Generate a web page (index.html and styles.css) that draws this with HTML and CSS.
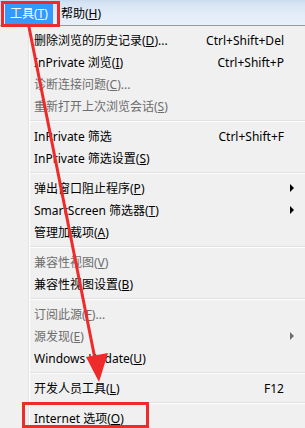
FILE: index.html
```html
<!DOCTYPE html>
<html>
<head>
<meta charset="utf-8">
<link rel="stylesheet" href="styles.css">
</head>
<body>
<div class="page">
  <div class="menubar">
    <span class="top-item active">工具(<u>T</u>)</span>
    <span class="top-item">帮助(<u>H</u>)</span>
  </div>
  <div class="menu">
    <div class="item"><span class="label">删除浏览的历史记录(<u>D</u>)...</span><span class="key">Ctrl+Shift+Del</span></div>
    <div class="item"><span class="label">InPrivate 浏览(<u>I</u>)</span><span class="key">Ctrl+Shift+P</span></div>
    <div class="item disabled"><span class="label">诊断连接问题(<u>C</u>)...</span></div>
    <div class="item disabled"><span class="label">重新打开上次浏览会话(<u>S</u>)</span></div>
    <div class="sep"></div>
    <div class="item"><span class="label">InPrivate 筛选</span><span class="key">Ctrl+Shift+F</span></div>
    <div class="item"><span class="label">InPrivate 筛选设置(<u>S</u>)</span></div>
    <div class="sep"></div>
    <div class="item"><span class="label">弹出窗口阻止程序(<u>P</u>)</span><span class="arrow"></span></div>
    <div class="item"><span class="label">SmartScreen 筛选器(<u>T</u>)</span><span class="arrow"></span></div>
    <div class="item"><span class="label">管理加载项(<u>A</u>)</span></div>
    <div class="sep"></div>
    <div class="item disabled"><span class="label">兼容性视图(<u>V</u>)</span></div>
    <div class="item"><span class="label">兼容性视图设置(<u>B</u>)</span></div>
    <div class="sep"></div>
    <div class="item disabled"><span class="label">订阅此源(<u>F</u>)...</span></div>
    <div class="item disabled"><span class="label">源发现(<u>E</u>)</span><span class="arrow"></span></div>
    <div class="item"><span class="label">Windows Update(<u>U</u>)</span></div>
    <div class="sep"></div>
    <div class="item"><span class="label">开发人员工具(<u>L</u>)</span><span class="key">F12</span></div>
    <div class="sep"></div>
    <div class="item"><span class="label">Internet 选项(<u>O</u>)</span></div>
  </div>
  <svg class="marks" width="305" height="428" viewBox="0 0 305 428">
    <rect x="2.5" y="2.5" width="56" height="23" fill="none" stroke="#ee2a2a" stroke-width="3"/>
    <line x1="29" y1="27" x2="96" y2="364" stroke="#ee2a2a" stroke-width="3"/>
    <polygon points="86,357 108,353 99,382" fill="#ee2a2a"/>
    <rect x="23.5" y="403.5" width="124" height="23" fill="none" stroke="#ee2a2a" stroke-width="3"/>
  </svg>
</div>
</body>
</html>
```
FILE: styles.css
```css
html, body {
  margin: 0;
  padding: 0;
  background: #f0f0f0;
}
.page {
  position: relative;
  width: 305px;
  height: 428px;
  overflow: hidden;
  font-family: "Noto Sans", "Noto Sans CJK SC", sans-serif;
  font-size: 12px;
  color: #000;
}
.menubar {
  height: 25px;
  display: flex;
  align-items: flex-end;
  padding-left: 5px;
  gap: 3px;
  background: linear-gradient(to bottom, #cbdaee 0px, #d6e3f3 3px, #e1ebf7 12px, #e7eff9 24px);
}
.top-item {
  height: 22px;
  line-height: 22px;
  padding: 0 5px;
}
.top-item.active {
  background: #3399ff;
  color: #fff;
}
.menu {
  border-top: 1px solid #9a9a9a;
  padding-top: 3px;
  height: 400px;
  background: linear-gradient(to right, #f0f0f0 28px, #e2e3e3 28px, #e2e3e3 29px, #ffffff 29px, #ffffff 30px, #f0f0f0 30px);
}
.item {
  height: 22px;
  display: flex;
  align-items: center;
  padding-left: 34px;
}
.item .label {
  flex: 1;
  white-space: nowrap;
}
.item.disabled {
  color: #6d6d6d;
}
.key {
  padding-right: 21px;
  white-space: nowrap;
}
.arrow {
  width: 0;
  height: 0;
  border-top: 4px solid transparent;
  border-bottom: 4px solid transparent;
  border-left: 4px solid #000;
  margin-right: 11px;
}
.item.disabled .arrow {
  border-left-color: #6d6d6d;
}
.sep {
  height: 8px;
  box-sizing: border-box;
  margin-left: 30px;
  padding-top: 3px;
}
.sep::before {
  content: "";
  display: block;
  height: 1px;
  background: #e0e0e0;
  border-bottom: 1px solid #ffffff;
}
.marks {
  position: absolute;
  left: 0;
  top: 0;
  pointer-events: none;
}
```
